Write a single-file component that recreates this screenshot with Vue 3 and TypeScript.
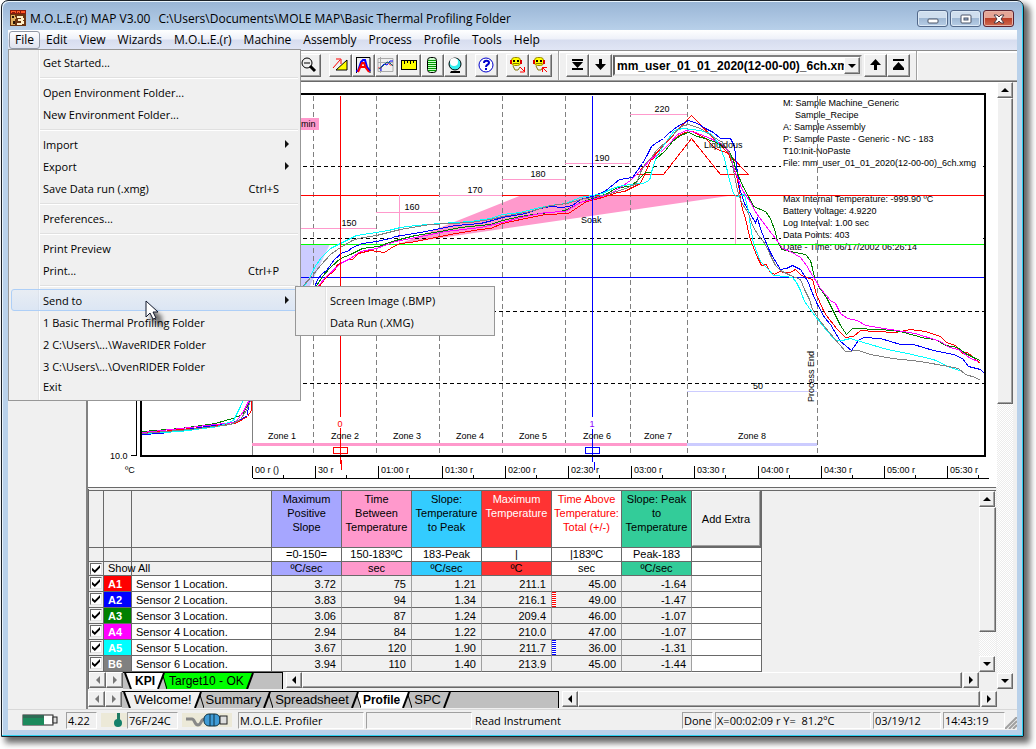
<script setup lang="ts">
import { ref } from 'vue'

interface MenuEntry {
  label?: string
  shortcut?: string
  sub?: string[]
  arrow?: boolean
  short?: boolean
}

const menus = ['File', 'Edit', 'View', 'Wizards', 'M.O.L.E.(r)', 'Machine', 'Assembly', 'Process', 'Profile', 'Tools', 'Help']

const fileMenu: MenuEntry[] = [
  { label: 'Get Started...' },
  {},
  { label: 'Open Environment Folder...' },
  { label: 'New Environment Folder...' },
  {},
  { label: 'Import', arrow: true },
  { label: 'Export', arrow: true },
  { label: 'Save Data run (.xmg)', shortcut: 'Ctrl+S' },
  {},
  { label: 'Preferences...' },
  {},
  { label: 'Print Preview' },
  { label: 'Print...', shortcut: 'Ctrl+P' },
  {},
  { label: 'Send to', arrow: true, sub: ['Screen Image (.BMP)', 'Data Run (.XMG)'] },
  { label: '1 Basic Thermal Profiling Folder' },
  { label: '2 C:\\Users\\...\\WaveRIDER Folder' },
  { label: '3 C:\\Users\\...\\OvenRIDER Folder' },
  { label: 'Exit', short: true },
]

const dashedX = [313, 376, 439, 502, 565, 630, 687, 817]
const dashedY = [166, 238, 311, 383]
const axisTicks = ['00 r ()', '30 r', '01:00 r', '01:30 r', '02:00 r', '02:30 r', '03:00 r', '03:30 r', '04:00 r', '04:30 r', '05:00 r', '05:30 r']
const tickX = (i: number) => Math.round(252 + i * 63.2)
const zones = [282, 345, 407, 470, 533, 597, 658, 752]
const setpoints = [
  { x1: 290, x2: 376, y: 228, tx: 349, t: '150' },
  { x1: 376, x2: 439, y: 212, tx: 412, t: '160' },
  { x1: 439, x2: 502, y: 195, tx: 475, t: '170' },
  { x1: 502, x2: 565, y: 179, tx: 538, t: '180' },
  { x1: 565, x2: 630, y: 163, tx: 602, t: '190' },
  { x1: 630, x2: 687, y: 114, tx: 662, t: '220' },
  { x1: 687, x2: 817, y: 391, tx: 758, t: '50' },
]
const info = [
  { x: 783, y: 106, t: 'M: Sample Machine_Generic' },
  { x: 795, y: 118, t: 'Sample_Recipe' },
  { x: 783, y: 130, t: 'A: Sample Assembly' },
  { x: 783, y: 142, t: 'P: Sample Paste - Generic - NC - 183' },
  { x: 783, y: 154, t: 'T10:Init-NoPaste' },
  { x: 783, y: 166, t: 'File: mm_user_01_01_2020(12-00-00)_6ch.xmg' },
  { x: 783, y: 202, t: 'Max Internal Temperature: -999.90 ºC' },
  { x: 783, y: 214, t: 'Battery Voltage: 4.9220' },
  { x: 783, y: 226, t: 'Log Interval: 1.00 sec' },
  { x: 783, y: 238, t: 'Data Points: 403' },
  { x: 783, y: 250, t: 'Date - Time: 06/17/2002 06:26:14' },
]

const curves = [
  { c: '#f00', p: '142,433 200,427 235,423 247,416 251,410 251,397 280,340 300,306 317,290 320,284 325,278 328,275 334,270 337,264 342,262 347,259 352,259 358,253 370,250 384,252 393,246 400,243 410,242 430,238 450,234 480,229 490,228 502,223 525,218 545,214 568,213 580,205 586,201 595,199 605,196 617,192 624,191 630,188 640,183 645,172 650,160 660,152 666,146 672,140 678,135 685,132 692,131 705,138 715,148 728,153 736,175 739,190 741,205 746,222 748,232 751,242 757,257 761,265 766,264 769,271 774,274 779,271 785,272 790,272 795,269 801,275 812,279 816,294 822,308 826,315 836,328 845,337 853,336 860,330 875,331 895,332 910,329 925,331 940,336 946,342 955,345 962,353 967,352 975,359 980,363' },
  { c: '#00f', p: '142,434 160,433 200,427 237,421 247,415 248,405 251,396 275,344 300,312 314,287 317,279 322,273 326,270 334,259 342,252 347,251 352,247 362,243 376,241 390,238 395,236 420,232 440,228 455,225 480,223 492,220 502,217 525,213 540,208 550,206 562,207 572,205 580,199 592,196 604,191 613,184 619,179 632,177 637,170 642,163 646,156 651,146 655,143 663,138 668,133 677,126 688,120 697,123 705,128 713,132 720,138 730,138 734,146 736,165 739,188 744,203 749,212 755,222 757,218 761,231 768,248 772,256 780,269 786,268 792,265 800,269 808,282 812,293 817,304 824,317 830,324 840,341 851,350 858,340 863,337 880,338 900,344 913,344 933,350 953,354 962,358 968,366 980,369 984,373' },
  { c: '#008000', p: '142,431 180,428 215,423 232,418 242,414 247,405 250,396 278,340 300,309 315,287 322,276 330,267 340,258 350,254 362,248 378,246 395,240 415,235 440,231 460,227 490,224 502,220 520,216 540,213 560,211 567,209 580,202 595,197 607,193 617,187 630,186 637,180 645,172 651,172 655,159 665,150 672,141 680,135 688,132 697,136 705,138 718,143 728,150 733,160 735,168 742,185 749,198 753,206 765,211 770,218 774,229 777,240 781,249 790,251 805,254 810,260 812,268 814,277 818,286 826,297 835,315 840,325 846,334 852,328 880,329 900,331 925,338 935,339 945,345 957,347 965,353 975,358 980,360' },
  { c: '#f0f', p: '142,432 180,428 215,424 235,422 243,411 249,399 272,346 300,312 314,290 325,277 340,263 350,258 360,251 376,248 395,241 420,236 445,231 480,227 502,222 520,217 545,212 565,211 580,202 595,198 610,193 620,187 630,180 640,170 650,159 660,152 670,142 677,134 686,130 695,132 710,138 720,143 728,150 735,172 742,190 749,200 756,213 765,225 778,242 782,248 790,251 800,257 806,265 812,275 820,288 830,300 835,303 840,313 847,318 857,320 865,325 877,327 890,329 915,333 940,341 949,347 958,349 970,358 978,361' },
  { c: '#0ff', p: '142,433 180,431 218,426 233,420 240,406 244,397 262,348 290,308 303,287 310,276 314,267 321,257 330,248 340,243 350,238 356,235 376,232 388,230 400,227 415,225 440,223 470,221 490,218 502,214 520,212 535,208 550,205 565,203 580,197 592,195 602,193 612,188 622,185 632,184 642,183 649,180 652,168 656,156 662,147 668,138 674,130 682,128 700,130 710,133 718,143 724,158 729,180 733,193 736,196 744,194 748,210 750,226 753,243 760,261 768,269 773,275 785,276 792,277 796,282 800,290 804,301 812,312 822,325 835,340 842,340 850,338 863,342 887,349 907,353 933,359 950,367 962,371' },
  { c: '#808080', p: '142,433 190,429 230,424 240,419 247,408 251,398 268,346 292,306 302,286 312,275 320,265 330,254 340,247 352,240 358,238 376,235 400,229 430,224 470,222 490,219 502,216 530,211 550,205 567,203 580,199 592,197 610,193 625,188 632,185 636,183 640,172 645,163 651,157 656,150 665,142 672,135 680,126 688,124 700,128 712,136 722,142 730,155 733,170 737,190 741,202 748,213 752,225 758,235 765,244 770,255 775,265 780,270 790,275 800,279 804,289 809,299 812,309 820,321 828,331 845,351 858,350 870,354 892,358 920,361 948,366 958,368 965,374 975,377 980,380' },
]

const columns = [
  { head: 'Maximum Positive Slope', range: '=0-150=', unit: 'ºC/sec', k: 'violet' },
  { head: 'Time Between Temperature', range: '150-183ºC', unit: 'sec', k: 'pink' },
  { head: 'Slope: Temperature to Peak', range: '183-Peak', unit: 'ºC/sec', k: 'sky' },
  { head: 'Maximum Temperature', range: '|', unit: 'ºC', k: 'red' },
  { head: 'Time Above Temperature: Total (+/-)', range: '|183ºC', unit: 'sec', k: 'plain' },
  { head: 'Slope: Peak to Temperature', range: 'Peak-183', unit: 'ºC/sec', k: 'green' },
]
const rows = ref([
  { id: 'A1', k: 'a1', on: true, v: ['3.72', '75', '1.21', '211.1', '45.00', '-1.64'], mark: '' },
  { id: 'A2', k: 'a2', on: true, v: ['3.83', '94', '1.34', '216.1', '49.00', '-1.47'], mark: 'mark-red' },
  { id: 'A3', k: 'a3', on: true, v: ['3.06', '87', '1.24', '209.4', '46.00', '-1.07'], mark: '' },
  { id: 'A4', k: 'a4', on: true, v: ['2.94', '84', '1.22', '210.0', '47.00', '-1.07'], mark: '' },
  { id: 'A5', k: 'a5', on: true, v: ['3.67', '120', '1.90', '211.7', '36.00', '-1.31'], mark: 'mark-blue' },
  { id: 'B6', k: 'b6', on: true, v: ['3.94', '110', '1.40', '213.9', '45.00', '-1.44'], mark: '' },
])
const showAll = ref(true)
const run = ref('mm_user_01_01_2020(12-00-00)_6ch.xmg')

const kpiTabs = [
  { t: 'KPI', f: '#fff', b: true },
  { t: 'Target10 - OK', f: '#0f0', b: false },
]
const pageTabs = [
  { t: 'Welcome!', f: '#f0f0f0', b: false },
  { t: 'Summary', f: '#c0c0c0', b: false },
  { t: 'Spreadsheet', f: '#c0c0c0', b: false },
  { t: 'Profile', f: '#fff', b: true },
  { t: 'SPC', f: '#c0c0c0', b: false },
]
</script>

<template>
  <div class="desktop">
    <div class="window">
      <header class="titlebar">
        <svg class="app-icon" width="16" height="16" viewBox="0 0 16 16" shape-rendering="crispEdges" aria-hidden="true">
          <rect width="16" height="16" fill="#6b3410" />
          <path d="M0 0h16v4H0z" fill="#8a1a0c" />
          <path d="M1 3V1h1l1 1 1-1h1v2M7 3V1h2v2M11 3V1h3v1h-3" stroke="#ff5a28" fill="none" />
          <path d="M1 5h4v10H1zM3 7h3v2H3z" fill="#e0b060" />
          <path d="M2 6h2v2H2zM3 11h2v3H3z" fill="#2a1608" />
          <path d="M7 6h6v2h1v2h-1v1h1v3h-2v1H7v-2h4v-2H8v-2h3V8H7z" fill="#fff0c8" />
        </svg>
        <h1>M.O.L.E.(r) MAP V3.00</h1>
        <span class="path">C:\Users\Documents\MOLE MAP\Basic Thermal Profiling Folder</span>
        <div class="caption">
          <button type="button" aria-label="Minimize"><svg width="12" height="10" viewBox="0 0 12 10"><rect x="1" y="5" width="10" height="4" rx="1" fill="#fff" stroke="#4a5568" /></svg></button>
          <button type="button" aria-label="Restore"><svg width="12" height="10" viewBox="0 0 12 10"><rect x="1" y="1" width="10" height="8" rx="1" fill="#fff" stroke="#4a5568" /><rect x="4" y="4" width="4" height="2" fill="#9fb9d8" stroke="#4a5568" /></svg></button>
          <button type="button" class="close" aria-label="Close"><svg width="12" height="10" viewBox="0 0 12 10"><path d="M1 1h3l2 2 2-2h3L8 5l3 4H8L6 7 4 9H1l3-4z" fill="#fff" stroke="#4a3a44" /></svg></button>
        </div>
      </header>

      <nav class="menubar">
        <button v-for="(m, i) in menus" :key="m" type="button" :class="{ open: i === 0 }">{{ m }}</button>
        <ul class="menu">
          <template v-for="(e, i) in fileMenu" :key="i">
            <li v-if="!e.label" class="sep"></li>
            <li v-else :class="{ hot: e.sub, short: e.short }">
              <button type="button">
                <span>{{ e.label }}</span>
                <span v-if="e.shortcut" class="key">{{ e.shortcut }}</span>
                <i v-if="e.arrow" class="arrow"></i>
              </button>
              <ul v-if="e.sub" class="menu sub">
                <li v-for="s in e.sub" :key="s"><button type="button">{{ s }}</button></li>
              </ul>
              <svg v-if="e.sub" class="pointer" width="24" height="30" viewBox="0 0 24 30" aria-hidden="true">
                <defs><filter id="soft" x="-50%" y="-50%" width="200%" height="200%"><feGaussianBlur stdDeviation="2" /></filter></defs>
                <path d="M6 8v15l4-3 5 7 4-3-4-6h4z" fill="#000" opacity=".55" filter="url(#soft)" />
                <path d="M1 1v16l4-4 3 6 3-1-3-6h5z" fill="#fff" stroke="#10182c" />
              </svg>
            </li>
          </template>
        </ul>
      </nav>

      <div class="toolbar">
        <button type="button" class="first" aria-label="Zoom out">
          <svg viewBox="0 0 18 18"><circle cx="7" cy="7" r="5" fill="none" stroke="#000" /><path d="M4 7h6" stroke="#000" stroke-width="1" /><path d="M10 10l5 5" stroke="#000" stroke-width="3" /></svg>
        </button>
        <button type="button" class="gap" aria-label="Slope">
          <svg viewBox="0 0 18 18"><path d="M5 14L16 4v10z" fill="#ff0" stroke="#000" /><path d="M2 12L9 4M5 3h5v5" fill="none" stroke="#f00" /></svg>
        </button>
        <button type="button" aria-label="Peak">
          <svg viewBox="0 0 18 18"><path d="M2 1.500h14V17M2.500 1v16" fill="none" stroke="#000" /><path d="M2 15h2l3-9 2-2h2l2 7 3 4" fill="none" stroke="#00f" stroke-width="2" /><path d="M4 16l4-9h2l2 5 3 4M7 11h4" fill="none" stroke="#f00" stroke-width="2" /></svg>
        </button>
        <button type="button" aria-label="Profile curve">
          <svg viewBox="0 0 18 18"><path d="M1 2.500h15v13H1zM3.500 1v16M1 6.500h15" stroke="#aaa" fill="none" /><path d="M4 15v-4l3-3 3 1 3-4h3" fill="none" stroke="#00f" /><path d="M1 12h3l4-4 3-2 2 3h3" fill="none" stroke="#f00" opacity=".75" /><path d="M2 13l5-4 3-3 3 1 3 3" fill="none" stroke="#007080" /></svg>
        </button>
        <button type="button" aria-label="Ruler">
          <svg viewBox="0 0 18 18" shape-rendering="crispEdges"><path d="M1.500 4.500h15v9h-15z" fill="#ff0" stroke="#000" /><path d="M4.500 5v3M7.500 5v2M10.500 5v3M13.500 5v2" stroke="#000" /></svg>
        </button>
        <button type="button" aria-label="Data list">
          <svg viewBox="0 0 18 18"><rect x="4.500" y="1.500" width="9" height="15" rx="3" fill="#cfc" stroke="#000" /><path d="M5 4.500h8M5 6.500h8M5 8.500h8M5 10.500h8M5 12.500h8M5 14.500h8" stroke="#090" /></svg>
        </button>
        <button type="button" aria-label="Globe">
          <svg viewBox="0 0 18 18"><path d="M5 15h9v2H4z" fill="#000" /><circle cx="9" cy="8" r="6" fill="#3ee" stroke="#000" /><circle cx="8" cy="6" r="4" fill="#fff" /></svg>
        </button>
        <button type="button" class="gap" aria-label="Help">
          <svg viewBox="0 0 18 18"><circle cx="9" cy="9" r="7" fill="#fff" stroke="#00c" /><path d="M7 7c0-3 5-3 5 0 0 2-3 1-3 4M9 12v2" fill="none" stroke="#00c" stroke-width="2" /></svg>
        </button>
        <button type="button" class="gap" aria-label="Read instrument">
          <svg viewBox="0 0 18 18"><rect x="3.500" y="1.500" width="9" height="8" rx="3" fill="#ff0" stroke="#980" /><path d="M2 4h2v4H2zM12 4h2v4h-2z" fill="#d00" /><path d="M5 4h2v2H5zM9 4h2v2H9z" fill="#000" /><path d="M5 7.500h6M5 10l2 4h3l2-3" fill="none" stroke="#870" /><path d="M12 11l4 4M16.500 11v5H12" fill="none" stroke="#f00" /></svg>
        </button>
        <button type="button" aria-label="Send to instrument">
          <svg viewBox="0 0 18 18"><rect x="3.500" y="1.500" width="9" height="8" rx="3" fill="#ff0" stroke="#980" /><path d="M2 4h2v4H2zM12 4h2v4h-2z" fill="#d00" /><path d="M5 4h2v2H5zM9 4h2v2H9z" fill="#000" /><path d="M5 7.500h6M5 10l2 4h3l2-3" fill="none" stroke="#870" /><path d="M16 16l-4-4M11.500 16v-4.500H16" fill="none" stroke="#f00" /></svg>
        </button>
        <span class="divider"></span>
        <button type="button" aria-label="Last run">
          <svg viewBox="0 0 18 18"><path d="M4 3h11v2H4zM4 6h11L9.500 12zM4 12h11v2H4z" /></svg>
        </button>
        <button type="button" aria-label="Next run">
          <svg viewBox="0 0 18 18"><path d="M8 3h3v5h4l-5.500 6L4 8h4z" /></svg>
        </button>
        <label class="combo">
          <select v-model="run" aria-label="Data run"><option>mm_user_01_01_2020(12-00-00)_6ch.xmg</option></select>
          <i class="combo-btn"><i class="tri down"></i></i>
        </label>
        <button type="button" aria-label="Previous run">
          <svg viewBox="0 0 18 18"><path d="M8 14h3V9h4L9.500 3 4 9h4z" /></svg>
        </button>
        <button type="button" aria-label="First run">
          <svg viewBox="0 0 18 18"><path d="M4 3h11v2H4zM4 12h11L9.500 6zM4 12h11v2H4z" /></svg>
        </button>
        <span class="divider"></span>
      </div>

      <main class="work">
        <aside class="side"></aside>
        <div class="stage">
          <div class="upper">
            <section class="main">
              <svg class="chart" viewBox="88 82 909 405" role="img" aria-label="Thermal profile">
                <rect x="88" y="82" width="909" height="405" fill="#fff" />
                <polygon points="290,244 330,244 308,290 290,290" fill="#ccf" />
                <text x="581" y="223">Soak</text>
                <polygon points="399,244 522,195 735,195" fill="#ff99cc" />
                <g class="px">
                  <line v-for="y in dashedY" :key="y" x1="142" :y1="y + 0.5" x2="985" :y2="y + 0.5" stroke="#000" stroke-dasharray="4 3" />
                </g>
                <rect x="781" y="158" width="202" height="10" fill="#fff" />
                <rect x="781" y="232" width="202" height="10" fill="#fff" />
                <text v-for="l in info" :key="l.y" :x="l.x" :y="l.y">{{ l.t }}</text>
                <g class="px">
                  <line v-for="x in dashedX" :key="x" :x1="x + 0.5" y1="96" :x2="x + 0.5" y2="455" stroke="#808080" stroke-dasharray="5 3" />
                  <path d="M252.500 380v76" stroke="#808080" />
                  <path d="M142 195.500h843" stroke="#f00" />
                  <path d="M142 244.500h843" stroke="#0f0" />
                  <path d="M142 277.500h843" stroke="#00f" />
                  <path d="M399.500 195v49M735.500 195v49" stroke="#ff99cc" />
                  <line v-for="s in setpoints" :key="s.t" :x1="s.x1" :x2="s.x2" :y1="s.y + 0.5" :y2="s.y + 0.5" :stroke="s.t === '50' ? '#ccf' : '#ff99cc'" />
                  <path d="M252 444.500h435" stroke="#ff99cc" stroke-width="3" />
                  <path d="M687 444.500h130" stroke="#ccf" stroke-width="3" />
                  <rect x="290" y="118" width="29" height="12" fill="#ff99cc" />
                  <g transform="translate(0.5 0.5)" fill="none">
                    <path d="M636 174h27l28-36 29 36h28l-57-59z" stroke="#f00" />
                    <polyline v-for="c in curves" :key="c.c" :points="c.p" :stroke="c.c" />
                  </g>
                  <path d="M340.500 96v321M340.500 428v36M341.500 460v10M333.500 447.500h14v6h-14z" stroke="#f00" fill="none" />
                  <path d="M592.500 96v321M592.500 429v33M594.500 462v8M585.500 447.500h14v6h-14z" stroke="#00f" fill="none" />
                  <path d="M141 93v364M140 94h846M985 93v364M140 456h846" stroke="#000" stroke-width="2" />
                  <path d="M136.500 94v362M131 455.500h6M252.500 478.500h736" stroke="#000" fill="none" />
                  <template v-for="(t, i) in axisTicks" :key="t">
                    <line :x1="tickX(i) + 0.5" :x2="tickX(i) + 0.5" y1="466" y2="478" stroke="#000" />
                    <line :x1="tickX(i) + 31.5" :x2="tickX(i) + 31.5" y1="475" y2="478" stroke="#000" />
                  </template>
                </g>
                <text v-for="(t, i) in axisTicks" :key="t" :x="tickX(i) + 3" y="473">{{ t }}</text>
                <text v-for="(z, i) in zones" :key="z" :x="z" y="439" text-anchor="middle">Zone {{ i + 1 }}</text>
                <text v-for="s in setpoints" :key="s.t" :x="s.tx" :y="s.y - 2" text-anchor="middle">{{ s.t }}</text>
                <text x="301" y="127">min</text>
                <text x="704" y="148">Liquidous</text>
                <text class="cursor-a" x="340" y="427" text-anchor="middle">0</text>
                <text class="cursor-b" x="592" y="427" text-anchor="middle">1</text>
                <text x="110" y="459">10.0</text>
                <text x="125" y="473">ºC</text>
                <text transform="translate(814 402) rotate(-90)">Process End</text>
              </svg>

              <div class="grid-panel">
                <div class="grid-scroll">
                  <table>
                    <colgroup><col class="c-check" /><col class="c-id" /><col class="c-loc" /><col v-for="n in 7" :key="n" class="c-val" /></colgroup>
                    <thead>
                      <tr class="r-head">
                        <th></th><th></th><th></th>
                        <th v-for="c in columns" :key="c.head" :class="c.k">{{ c.head }}</th>
                        <th class="extra"><button type="button">Add Extra</button></th>
                      </tr>
                      <tr class="r-sub">
                        <td></td><td></td><td></td>
                        <td v-for="c in columns" :key="c.head" class="w">{{ c.range }}</td>
                        <td class="w"></td>
                      </tr>
                      <tr class="r-sub">
                        <td class="ck"><input id="show-all" v-model="showAll" type="checkbox" /></td>
                        <td class="show"><label for="show-all">Show All</label></td>
                        <td></td>
                        <td v-for="c in columns" :key="c.head" :class="['unit', c.k]">{{ c.unit }}</td>
                        <td class="w"></td>
                      </tr>
                    </thead>
                    <tbody>
                      <tr v-for="(r, i) in rows" :key="r.id">
                        <td class="ck"><input v-model="r.on" type="checkbox" :aria-label="`Show ${r.id}`" /></td>
                        <td :class="['id', r.k]">{{ r.id }}</td>
                        <td class="loc">Sensor {{ i + 1 }} Location.</td>
                        <td v-for="(v, j) in r.v" :key="j" :class="['num', j === 4 ? r.mark : '']">{{ v }}</td>
                        <td class="w"></td>
                      </tr>
                    </tbody>
                  </table>
                  <div class="vscroll inner">
                    <button type="button" aria-label="Scroll up"><i class="tri up"></i></button>
                    <i class="thumb"></i>
                    <i class="track"></i>
                    <button type="button" aria-label="Scroll down"><i class="tri down"></i></button>
                  </div>
                </div>
                <div class="tabs kpi">
                  <button type="button" class="nav" aria-label="Previous tab"><i class="tri left dim"></i></button>
                  <button type="button" class="nav" aria-label="Next tab"><i class="tri right dim"></i></button>
                  <div class="strip">
                    <svg class="edge" width="10" height="16" viewBox="0 0 10 16"><path d="M2 0h8v16H8z" fill="#fff" /><path d="M2 0l6 16" stroke="#000" stroke-width="2" /></svg>
                    <template v-for="(t, i) in kpiTabs" :key="t.t">
                      <button type="button" :class="{ bold: t.b }" :style="{ background: t.f }">{{ t.t }}</button>
                      <svg class="edge" width="10" height="16" viewBox="0 0 10 16">
                        <path d="M0 0h7L2 16H0z" :fill="t.f" />
                        <path v-if="i < kpiTabs.length - 1" d="M6 2l3 14h1V0H7z" :fill="kpiTabs[i + 1].f" />
                        <path v-if="i < kpiTabs.length - 1" d="M6 3l4 13" stroke="#000" />
                        <path d="M1 16L7 0" stroke="#000" stroke-width="2" />
                      </svg>
                    </template>
                  </div>
                  <div class="hscroll">
                    <button type="button" aria-label="Scroll left"><i class="tri left"></i></button>
                    <i class="thumb"></i>
                    <button type="button" aria-label="Scroll right"><i class="tri right"></i></button>
                  </div>
                </div>
              </div>
            </section>
            <div class="vscroll outer">
              <button type="button" aria-label="Scroll up"><i class="tri up"></i></button>
              <i class="thumb"></i>
              <i class="track"></i>
              <button type="button" aria-label="Scroll down"><i class="tri down"></i></button>
            </div>
          </div>
          <div class="tabs pages">
            <button type="button" class="nav" aria-label="Previous page tab"><i class="tri left dim"></i></button>
            <button type="button" class="nav" aria-label="Next page tab"><i class="tri right dim"></i></button>
            <div class="strip">
              <svg class="edge" width="10" height="16" viewBox="0 0 10 16"><path d="M2 0h8v16H8z" fill="#f0f0f0" /><path d="M2 0l6 16" stroke="#000" stroke-width="2" /></svg>
              <template v-for="(t, i) in pageTabs" :key="t.t">
                <button type="button" :class="{ bold: t.b }" :style="{ background: t.f }">{{ t.t }}</button>
                <svg class="edge" width="10" height="16" viewBox="0 0 10 16">
                  <path d="M0 0h7L2 16H0z" :fill="t.f" />
                  <path v-if="i < pageTabs.length - 1" d="M6 2l3 14h1V0H7z" :fill="pageTabs[i + 1].f" />
                  <path v-if="i < pageTabs.length - 1" d="M6 3l4 13" stroke="#000" />
                  <path d="M1 16L7 0" stroke="#000" stroke-width="2" />
                </svg>
              </template>
            </div>
            <div class="hscroll">
              <button type="button" aria-label="Scroll left"><i class="tri left"></i></button>
              <i class="thumb"></i>
              <button type="button" aria-label="Scroll right"><i class="tri right"></i></button>
            </div>
          </div>
        </div>
      </main>

      <footer class="status">
        <svg class="battery" width="36" height="12" viewBox="0 0 36 12" aria-hidden="true"><rect x="1" y="1" width="30" height="10" fill="#fff" stroke="#222" /><rect x="1" y="1" width="21" height="10" fill="#1c8a5c" /><path d="M1 1h21v3H1z" fill="#2f6b55" /><rect x="31" y="3" width="4" height="6" fill="#ddd" stroke="#222" /></svg>
        <span class="cell volt">4.22</span>
        <span class="icon-bg thermo"><svg width="10" height="14" viewBox="0 0 10 14" aria-hidden="true"><path d="M4 0h3v8H4z" fill="#1e7a63" /><circle cx="5" cy="10" r="4" fill="#14806a" /></svg></span>
        <span class="cell temp">76F/24C</span>
        <span class="icon-bg plug"><svg width="44" height="14" viewBox="0 0 44 14" aria-hidden="true"><path d="M1 6h6c3 0 2 6 6 6s2-6 7-6" fill="none" stroke="#888" stroke-width="3" /><rect x="19" y="1" width="16" height="12" rx="5" fill="#3f9bd6" stroke="#134" /><path d="M25 1v12M29 1v12" stroke="#134" /><rect x="35" y="3" width="7" height="8" fill="#ddd" stroke="#222" /></svg></span>
        <span class="cell device">M.O.L.E. Profiler</span>
        <span class="cell blank"></span>
        <span class="flat">Read Instrument</span>
        <span class="cell done">Done</span>
        <span class="cell coords">X=00:02:09 r Y=&nbsp; 81.2ºC</span>
        <span class="cell date">03/19/12</span>
        <span class="cell time">14:43:19</span>
        <svg class="grip" width="12" height="12" viewBox="0 0 12 12" aria-hidden="true"><path d="M0 12L12 0M4 12l8-8M8 12l4-4" stroke="#a0a0a0" stroke-width="2" /></svg>
      </footer>
    </div>
  </div>
</template>

<style>
body {
  margin: 0;
  background: #fff;
}
</style>

<style scoped>
* {
  box-sizing: border-box;
}
.desktop {
  min-height: 100vh;
  padding: 0 12px 12px 1px;
  display: flex;
}
.window {
  flex: 1;
  min-width: 0;
  display: flex;
  flex-direction: column;
  border: 1px solid #1a2028;
  border-radius: 7px 7px 0 0;
  padding: 0 6px 6px;
  background: linear-gradient(#98b4d5, #b9d1ea 30px);
  box-shadow: inset -1px -1px 0 #2cd0f0, inset 1px 1px 0 #e8f3fc, 5px 5px 6px 1px rgba(0, 0, 0, 0.6);
  font-family: 'Open Sans', 'Noto Sans', sans-serif;
  font-size: 11px;
  color: #000;
}
button {
  font: inherit;
  color: inherit;
  margin: 0;
  padding: 0;
  border: 0;
  background: none;
}
.titlebar {
  height: 29px;
  display: flex;
  align-items: center;
  padding: 5px 3px 0 2px;
}
.titlebar h1 {
  font-size: 12px;
  font-weight: 400;
  margin: 0 8px 0 4px;
}
.titlebar .path {
  font-size: 12px;
}
.caption {
  margin-left: auto;
  display: flex;
  gap: 2px;
  align-self: flex-start;
  padding-top: 4px;
}
.caption button {
  width: 31px;
  height: 17px;
  display: flex;
  align-items: center;
  justify-content: center;
  border: 1px solid #52688a;
  border-radius: 3px;
  background: linear-gradient(#cfdeee 45%, #9fb8d4 50%, #b7cde6);
  box-shadow: inset 0 0 0 1px #dce9f5;
}
.caption .close {
  background: linear-gradient(#e5a596 45%, #bb3f28 50%, #cf6a50);
  border-color: #5c2230;
  box-shadow: inset 0 0 0 1px #e6b4a8;
}
.menubar {
  position: relative;
  height: 20px;
  display: flex;
  align-items: center;
  padding: 0 1px;
  font-size: 12px;
  background: linear-gradient(#fff, #eef1f9 45%, #d7ddef 50%, #e1e6f5);
}
.menubar > button {
  height: 18px;
  line-height: 16px;
  padding: 0 5px;
  border: 1px solid transparent;
  border-radius: 3px;
}
.menubar > button.open {
  border-color: #9097a3;
  background: linear-gradient(#fdfdfe, #dfe3ee);
}
.menu {
  position: absolute;
  z-index: 5;
  left: 0;
  top: 19px;
  width: 293px;
  margin: 0;
  padding: 1px 2px 4px;
  list-style: none;
  font-size: 11px;
  border: 1px solid #979797;
  background: linear-gradient(90deg, transparent 29px, #e2e2e2 29px, #e2e2e2 30px, #fff 30px, #fff 31px, transparent 31px) #f0f0f0;
}
.menu li {
  position: relative;
  height: 22px;
}
.menu li.short {
  height: 19px;
}
.menu li.sep {
  height: 8px;
  margin-left: 29px;
  background: linear-gradient(transparent 4px, #e0e0e0 4px, #e0e0e0 5px, #fff 5px, #fff 6px, transparent 6px);
}
.menu button {
  width: 100%;
  height: 100%;
  display: flex;
  align-items: center;
  padding: 0 8px 0 31px;
  border: 1px solid transparent;
  border-radius: 3px;
  text-align: left;
}
.menu .hot > button {
  border-color: #aecff7;
  background: linear-gradient(rgba(220, 232, 248, 0.4), rgba(200, 220, 248, 0.5));
}
.key {
  margin-left: auto;
  margin-right: 10px;
}
.arrow {
  margin-left: auto;
  border-left: 4px solid #111;
  border-top: 4px solid transparent;
  border-bottom: 4px solid transparent;
}
.menu.sub {
  left: 284px;
  top: -3px;
  width: 200px;
  padding: 2px;
}
.pointer {
  position: absolute;
  z-index: 6;
  left: 134px;
  top: 11px;
}
.toolbar {
  height: 31px;
  flex: none;
  display: flex;
  align-items: center;
  border-top: 1px solid #8c8c8c;
  border-bottom: 1px solid #a0a0a0;
  background: #f0f0f0;
  box-shadow: inset 0 2px 0 #fff;
}
.toolbar button,
.vscroll button,
.hscroll button,
.nav,
.thumb,
.combo-btn {
  background: #f0f0f0;
  border: 1px solid;
  border-color: #fff #696969 #696969 #fff;
  box-shadow: inset -1px -1px 0 #a0a0a0;
}
.toolbar button {
  flex: none;
  width: 23px;
  height: 23px;
  padding: 1px 0 0 1px;
  display: flex;
  align-items: flex-start;
}
.toolbar svg {
  flex: none;
  width: 18px;
  height: 18px;
}
.toolbar .first {
  margin-left: 290px;
}
.toolbar .gap {
  margin-left: 8px;
}
.divider {
  width: 2px;
  height: 29px;
  margin: 0 6px;
  border-left: 1px solid #a0a0a0;
  border-right: 1px solid #fff;
}
.combo {
  position: relative;
  width: 249px;
  height: 21px;
  margin: 0 2px 0 1px;
  border: 2px solid;
  border-color: #808080 #e3e3e3 #e3e3e3 #606060;
  background: #fff;
}
.combo select {
  appearance: none;
  display: block;
  width: 229px;
  height: 17px;
  padding: 0 0 0 2px;
  border: 0;
  background: #fff;
  color: #000;
  font: bold 12px 'Liberation Sans', Arial, sans-serif;
  text-overflow: clip;
}
.combo-btn {
  position: absolute;
  right: 0;
  top: 0;
  width: 16px;
  height: 17px;
  display: flex;
  align-items: center;
  justify-content: center;
  pointer-events: none;
}
.tri {
  display: block;
  border: 4px solid transparent;
}
.tri.down {
  border-top-color: #000;
  border-bottom: 0;
}
.tri.up {
  border-bottom-color: #000;
  border-top: 0;
}
.tri.left {
  border-right-color: #000;
  border-left: 0;
}
.tri.right {
  border-left-color: #000;
  border-right: 0;
}
.tri.left.dim {
  border-right-color: #777;
}
.tri.right.dim {
  border-left-color: #777;
}
.work {
  flex: 1;
  display: flex;
  min-height: 0;
  background: #f0f0f0;
}
.side {
  width: 78px;
  flex: none;
}
.stage {
  flex: 1;
  min-width: 0;
  display: flex;
  flex-direction: column;
  border-left: 2px solid #828282;
  border-top: 1px solid #696969;
}
.upper {
  flex: 1;
  display: flex;
}
.main {
  flex: 1;
  min-width: 0;
  display: flex;
  flex-direction: column;
}
.chart {
  display: block;
  width: 100%;
  height: auto;
}
.chart text {
  font: 9px 'Liberation Sans', Arial, sans-serif;
  fill: #000;
}
.chart .cursor-a {
  fill: #f00;
}
.chart .cursor-b {
  fill: #80f;
}
.px {
  shape-rendering: crispEdges;
}
.grid-panel {
  flex: 1;
  display: flex;
  flex-direction: column;
  border-top: 4px double #696969;
  margin-right: 1px;
  border-left: 1px solid #696969;
}
.grid-scroll {
  flex: 1;
  display: flex;
}
table {
  table-layout: fixed;
  width: 673px;
  border-collapse: separate;
  border-spacing: 0;
  align-self: flex-start;
  font: 11px/14px 'Liberation Sans', Arial, sans-serif;
}
.c-check {
  width: 15px;
}
.c-id {
  width: 28px;
}
.c-loc {
  width: 140px;
}
.c-val {
  width: 70px;
}
th,
td {
  padding: 0;
  height: 16px;
  font-weight: 400;
  white-space: nowrap;
  border-right: 1px solid #696969;
  border-bottom: 1px solid #696969;
}
.r-head th {
  height: 57px;
  padding-top: 1px;
  vertical-align: top;
  white-space: normal;
}
.r-sub td {
  height: 14px;
  line-height: 13px;
  text-align: center;
}
.violet {
  background: #a6a6ff;
}
.pink {
  background: #ff99cc;
}
.sky {
  background: #33ccff;
}
.red {
  background: #ff3333;
}
th.red {
  color: #fff;
}
.plain,
.w,
.loc {
  background: #fff;
}
th.plain {
  color: #f00;
}
.green {
  background: #33cc99;
}
.r-head th.extra {
  padding: 0;
  background: #696969;
}
.extra button {
  display: block;
  width: 68px;
  height: 55px;
  background: #f0f0f0;
  border: 1px solid;
  border-color: #fff #a0a0a0 #a0a0a0 #fff;
}
.r-sub .show {
  text-align: left;
  padding-left: 4px;
}
.show label {
  position: relative;
}
.ck {
  overflow: hidden;
  vertical-align: top;
}
input[type='checkbox'] {
  appearance: none;
  display: block;
  width: 12px;
  height: 12px;
  margin: 1px 0 0 1px;
  background: #fff;
  border: 1px solid;
  border-color: #696969 #e3e3e3 #e3e3e3 #696969;
}
input[type='checkbox']:checked::before {
  content: '';
  display: block;
  width: 8px;
  height: 8px;
  margin: 1px;
  background: #000;
  clip-path: polygon(0 35%, 35% 65%, 100% 0, 100% 35%, 35% 100%, 0 70%);
}
.id {
  color: #fff;
  font-weight: 700;
  padding-left: 4px;
}
.a1 {
  background: #f00;
}
.a2 {
  background: #00f;
}
.a3 {
  background: #008000;
}
.a4 {
  background: #f0f;
}
.a5 {
  background: #0ff;
}
.b6 {
  background: #808080;
}
.loc {
  padding-left: 4px;
}
.num {
  text-align: right;
  padding-right: 5px;
  border-right-color: #a0a0a0;
}
.mark-red {
  background: repeating-linear-gradient(#f00 0 1px, #fff 1px 2px) 0 0 / 4px 100% no-repeat;
}
.mark-blue {
  background: repeating-linear-gradient(#00f 0 1px, #fff 1px 2px) 0 0 / 4px 100% no-repeat;
}
.vscroll {
  width: 17px;
  flex: none;
  margin-left: auto;
  display: flex;
  flex-direction: column;
  background: conic-gradient(#fff 25%, #ececec 0 50%, #fff 0 75%, #ececec 0) 0 0 / 2px 2px;
}
.vscroll.outer {
  margin-right: 4px;
  width: 16px;
}
.vscroll button,
.hscroll button,
.nav {
  flex: none;
  width: 16px;
  height: 16px;
  display: flex;
  align-items: center;
  justify-content: center;
}
.vscroll .thumb {
  height: 125px;
}
.vscroll.outer .thumb {
  height: 306px;
}
.track {
  flex: 1;
}
.tabs {
  display: flex;
  height: 17px;
  flex: none;
}
.tabs .nav {
  width: 17px;
}
.tabs.kpi {
  padding-right: 17px;
  font: 12px/16px 'Liberation Sans', Arial, sans-serif;
}
.tabs.pages {
  padding-right: 20px;
  margin-top: 2px;
  height: 18px;
  font: 13px/16px 'Liberation Sans', Arial, sans-serif;
}
.strip {
  display: flex;
  height: 17px;
  border-top: 1px solid #000;
  border-right: 1px solid #000;
  background: #c0c0c0;
}
.kpi .strip {
  width: 160px;
}
.pages .strip {
  width: 437px;
}
.strip button {
  padding: 0 2px;
  height: 16px;
  white-space: nowrap;
}
.strip .bold {
  font-size: 12px;
  font-weight: 700;
}
.edge {
  flex: none;
  display: block;
}
.hscroll {
  flex: 1;
  display: flex;
  margin-left: 3px;
}
.hscroll .thumb {
  flex: 1;
  height: 16px;
  margin-right: 1px;
}
.status {
  display: flex;
  align-items: center;
  height: 21px;
  flex: none;
  padding: 1px 0 1px 14px;
  background: #f0f0f0;
  border-top: 1px solid #d8d8d8;
  white-space: nowrap;
}
.cell {
  height: 17px;
  line-height: 16px;
  padding-left: 1px;
  margin-right: 2px;
  border: 1px solid;
  border-color: #a0a0a0 #fff #fff #a0a0a0;
}
.volt {
  width: 31px;
  margin-left: 8px;
}
.icon-bg {
  display: flex;
  align-items: center;
  justify-content: center;
  height: 14px;
  background: #ece9d8;
}
.thermo {
  width: 26px;
  margin-left: 2px;
  padding-left: 8px;
}
.temp {
  width: 51px;
}
.plug {
  width: 50px;
  margin-left: 2px;
  margin-right: 6px;
}
.device {
  width: 126px;
}
.blank {
  width: 106px;
}
.flat {
  flex: 1;
  padding-left: 1px;
}
.done {
  width: 31px;
}
.coords {
  width: 156px;
}
.date {
  width: 68px;
}
.time {
  width: 62px;
  margin-right: 0;
}
.grip {
  align-self: flex-end;
}
</style>
